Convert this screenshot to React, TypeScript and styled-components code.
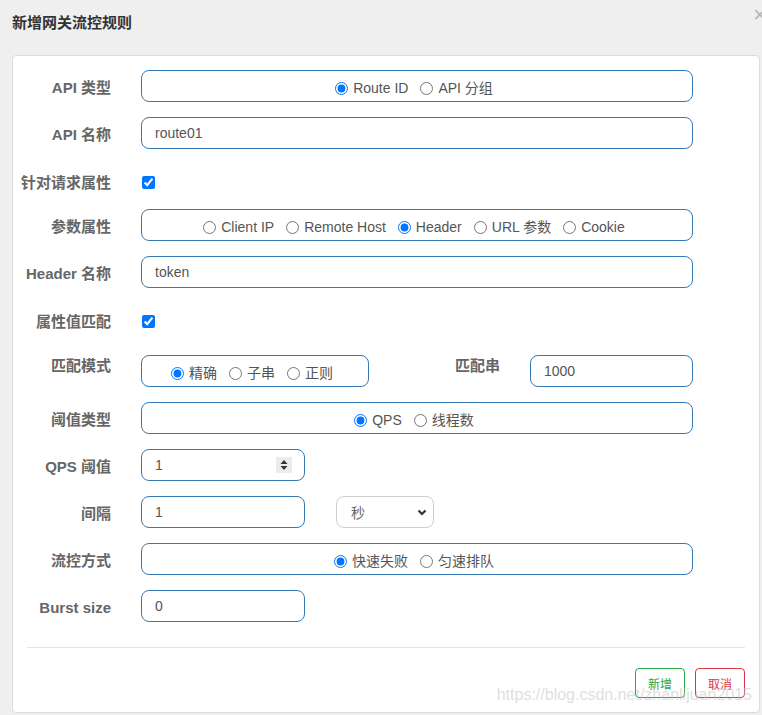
import * as React from 'react';
import styled, { createGlobalStyle } from 'styled-components';

const GlobalStyle = createGlobalStyle`
  html, body {
    margin: 0;
    padding: 0;
    background: #efefef;
  }
  body {
    font-family: "Liberation Sans", "Noto Sans CJK SC", sans-serif;
  }
  * {
    box-sizing: border-box;
  }
`;

const Page = styled.div`
  position: relative;
  width: 762px;
  height: 715px;
  overflow: hidden;
  background: #efefef;
`;

const Header = styled.div`
  display: flex;
  align-items: flex-start;
  height: 55px;
  padding: 13px 0 0 12px;
`;

const Title = styled.h4`
  margin: 0;
  font-size: 15px;
  line-height: 20px;
  font-weight: bold;
  color: #333;
`;

const Close = styled.span`
  margin-left: auto;
  margin-top: -9px;
  margin-right: -4px;
  font-size: 22px;
  line-height: 22px;
  color: #b5b5b5;
`;

const Panel = styled.div`
  width: 748px;
  margin-left: 12px;
  height: 658px;
  background: #fff;
  border: 1px solid #dcdcdc;
  border-radius: 4px;
  padding: 14px 14px 14px;
`;

const Row = styled.div<{ $height?: number }>`
  display: flex;
  gap: 30px;
  margin-bottom: 15px;
  height: ${(p) => (p.$height ? `${p.$height}px` : 'auto')};
`;

const Label = styled.label<{ $top?: number; $width?: number }>`
  display: flex;
  justify-content: flex-end;
  flex: none;
  width: ${(p) => p.$width ?? 84}px;
  padding-top: ${(p) => p.$top ?? 8}px;
  font-size: 15px;
  line-height: 20px;
  font-weight: bold;
  color: #666;
  white-space: nowrap;
`;

const RadioBox = styled.div<{ $width?: number; $offset?: number }>`
  display: flex;
  justify-content: center;
  align-items: center;
  width: ${(p) => p.$width ?? 552}px;
  height: 32px;
  margin-top: ${(p) => p.$offset ?? 0}px;
  padding: 4px 6px 0 0;
  border: 1px solid #337ab7;
  border-radius: 8px;
`;

const RadioLabel = styled.label`
  display: inline-flex;
  align-items: center;
  margin: 0 6px;
  font-size: 14px;
  line-height: 20px;
  color: #555;
  white-space: nowrap;
`;

const Radio = styled.input`
  width: 13px;
  height: 13px;
  margin: 0 5px 0 0;
`;

const TextInput = styled.input<{ $width?: number; $offset?: number }>`
  width: ${(p) => p.$width ?? 552}px;
  height: 32px;
  margin-top: ${(p) => p.$offset ?? 0}px;
  padding: 0 13px;
  border: 1px solid #337ab7;
  border-radius: 8px;
  font-family: "Liberation Sans", "Noto Sans CJK SC", sans-serif;
  font-size: 14px;
  color: #555;
  outline: none;
`;

const Check = styled.input`
  width: 13px;
  height: 13px;
  margin: 12px 0 0 1px;
`;

const NumberBox = styled.div`
  display: flex;
  align-items: center;
  width: 164px;
  height: 32px;
  padding: 0 12px 0 13px;
  border: 1px solid #337ab7;
  border-radius: 8px;
`;

const NumberText = styled.span`
  flex: 1;
  font-size: 14px;
  color: #555;
`;

const Spinner = styled.span`
  display: flex;
  align-items: center;
  justify-content: center;
  width: 16px;
  height: 16px;
  background: #ececec;
`;

const SelectBox = styled.div`
  display: flex;
  align-items: center;
  width: 98px;
  height: 32px;
  margin-left: 1px;
  padding: 0 6px 0 14px;
  border: 1px solid #cfcfcf;
  border-radius: 8px;
  font-size: 14px;
  color: #666;
`;

const SelectText = styled.span`
  flex: 1;
`;

const Divider = styled.hr`
  margin: 25px 0 20px;
  border: 0;
  border-top: 1px solid #e5e5e5;
`;

const Footer = styled.div`
  display: flex;
  justify-content: flex-end;
  gap: 10px;
`;

const Button = styled.button<{ $color: string }>`
  width: 50px;
  height: 30px;
  padding: 0;
  background: #fff;
  border: 1px solid ${(p) => p.$color};
  border-radius: 4px;
  color: ${(p) => p.$color};
  font-family: "Liberation Sans", "Noto Sans CJK SC", sans-serif;
  font-size: 12px;
`;

const Watermark = styled.div`
  position: absolute;
  right: 10px;
  top: 686px;
  font-size: 16px;
  line-height: 18px;
  color: rgba(195, 195, 195, 0.55);
  white-space: nowrap;
  pointer-events: none;
`;

type Option = { label: string; checked?: boolean };

const RadioGroup: React.FC<{ name: string; options: Option[]; width?: number; offset?: number }> = ({
  name,
  options,
  width,
  offset,
}) => (
  <RadioBox $width={width} $offset={offset}>
    {options.map((o) => (
      <RadioLabel key={o.label}>
        <Radio type="radio" name={name} defaultChecked={o.checked} />
        {o.label}
      </RadioLabel>
    ))}
  </RadioBox>
);

const SpinIcon = () => (
  <svg width="8" height="12" viewBox="0 0 8 12">
    <path d="M4 1 L7.5 5 H0.5 Z" fill="#333" />
    <path d="M4 11 L7.5 7 H0.5 Z" fill="#333" />
  </svg>
);

const Chevron = () => (
  <svg width="10" height="7" viewBox="0 0 10 7">
    <path d="M1.5 1.5 L5 5 L8.5 1.5" fill="none" stroke="#333" strokeWidth="2.2" />
  </svg>
);

export default function App() {
  return (
    <Page>
      <GlobalStyle />
      <Header>
        <Title>新增网关流控规则</Title>
        <Close>×</Close>
      </Header>
      <Panel>
        <Row>
          <Label>API 类型</Label>
          <RadioGroup
            name="apiType"
            options={[{ label: 'Route ID', checked: true }, { label: 'API 分组' }]}
          />
        </Row>
        <Row>
          <Label>API 名称</Label>
          <TextInput defaultValue="route01" />
        </Row>
        <Row $height={30}>
          <Label $top={9}>针对请求属性</Label>
          <Check type="checkbox" defaultChecked />
        </Row>
        <Row>
          <Label>参数属性</Label>
          <RadioGroup
            name="paramAttr"
            options={[
              { label: 'Client IP' },
              { label: 'Remote Host' },
              { label: 'Header', checked: true },
              { label: 'URL 参数' },
              { label: 'Cookie' },
            ]}
          />
        </Row>
        <Row>
          <Label>Header 名称</Label>
          <TextInput defaultValue="token" />
        </Row>
        <Row $height={30}>
          <Label $top={9}>属性值匹配</Label>
          <Check type="checkbox" defaultChecked />
        </Row>
        <Row>
          <Label>匹配模式</Label>
          <RadioGroup
            name="matchMode"
            width={228}
            offset={7}
            options={[{ label: '精确', checked: true }, { label: '子串' }, { label: '正则' }]}
          />
          <Label $width={101}>匹配串</Label>
          <TextInput $width={163} $offset={7} defaultValue="1000" />
        </Row>
        <Row>
          <Label>阈值类型</Label>
          <RadioGroup
            name="grade"
            options={[{ label: 'QPS', checked: true }, { label: '线程数' }]}
          />
        </Row>
        <Row>
          <Label>QPS 阈值</Label>
          <NumberBox>
            <NumberText>1</NumberText>
            <Spinner>
              <SpinIcon />
            </Spinner>
          </NumberBox>
        </Row>
        <Row>
          <Label>间隔</Label>
          <TextInput $width={164} defaultValue="1" />
          <SelectBox>
            <SelectText>秒</SelectText>
            <Chevron />
          </SelectBox>
        </Row>
        <Row>
          <Label>流控方式</Label>
          <RadioGroup
            name="behavior"
            options={[{ label: '快速失败', checked: true }, { label: '匀速排队' }]}
          />
        </Row>
        <Row>
          <Label>Burst size</Label>
          <TextInput $width={164} defaultValue="0" />
        </Row>
        <Divider />
        <Footer>
          <Button $color="#28a745">新增</Button>
          <Button $color="#dc3545">取消</Button>
        </Footer>
      </Panel>
      <Watermark>https://blog.csdn.net/zhanlijuan2015</Watermark>
    </Page>
  );
}
